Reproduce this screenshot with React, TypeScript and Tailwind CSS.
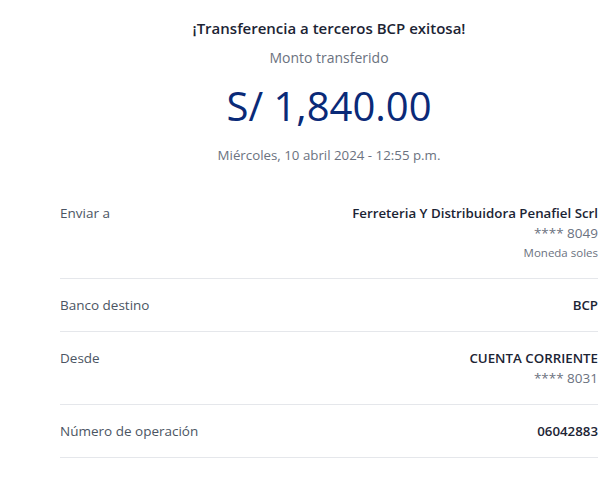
export default function App() {
  const rows = [
    { label: 'Enviar a', main: 'Ferreteria Y Distribuidora Penafiel Scrl', subs: ['**** 8049'], small: 'Moneda soles' },
    { label: 'Banco destino', main: 'BCP', subs: [] as string[] },
    { label: 'Desde', main: 'CUENTA CORRIENTE', subs: ['**** 8031'] },
    { label: 'Número de operación', main: '06042883', subs: [] as string[] },
  ];

  return (
    <div className="w-[615px] h-[481px] bg-white pl-[60px] pr-[17px] overflow-hidden" style={{ fontFamily: '"Open Sans", sans-serif' }}>
      {/* Header */}
      <div className="flex flex-col items-center pt-[17px]">
        <h1 className="text-[15px] font-semibold text-[#1c2434] leading-[22px]">¡Transferencia a terceros BCP exitosa!</h1>
        <p className="mt-[9px] text-[14px] text-[#6b7280] leading-[20px]">Monto transferido</p>
        <p className="mt-[13px] text-[40px] text-[#0a2a78] leading-[50px]">S/ 1,840.00</p>
        <p className="mt-[15px] text-[13.3px] text-[#6b7280] leading-[18px]">Miércoles, 10 abril 2024 - 12:55 p.m.</p>
      </div>

      {/* Detail rows */}
      <div className="mt-[23px]">
        {rows.map((r) => (
          <div key={r.label} className="flex justify-between items-start pt-[16px] pb-[16px] border-b border-[#e5e7eb]">
            <span className="text-[13.5px] text-[#4b5563] leading-[20px]">{r.label}</span>
            <div className="flex flex-col items-end">
              <span className="text-[13.3px] font-semibold text-[#1c2434] leading-[20px]">{r.main}</span>
              {r.subs.map((s) => (
                <span key={s} className="text-[13.5px] text-[#6b7280] leading-[20px]">{s}</span>
              ))}
              {r.small && <span className="text-[11.5px] text-[#6b7280] leading-[19px]">{r.small}</span>}
            </div>
          </div>
        ))}
      </div>
    </div>
  );
}
